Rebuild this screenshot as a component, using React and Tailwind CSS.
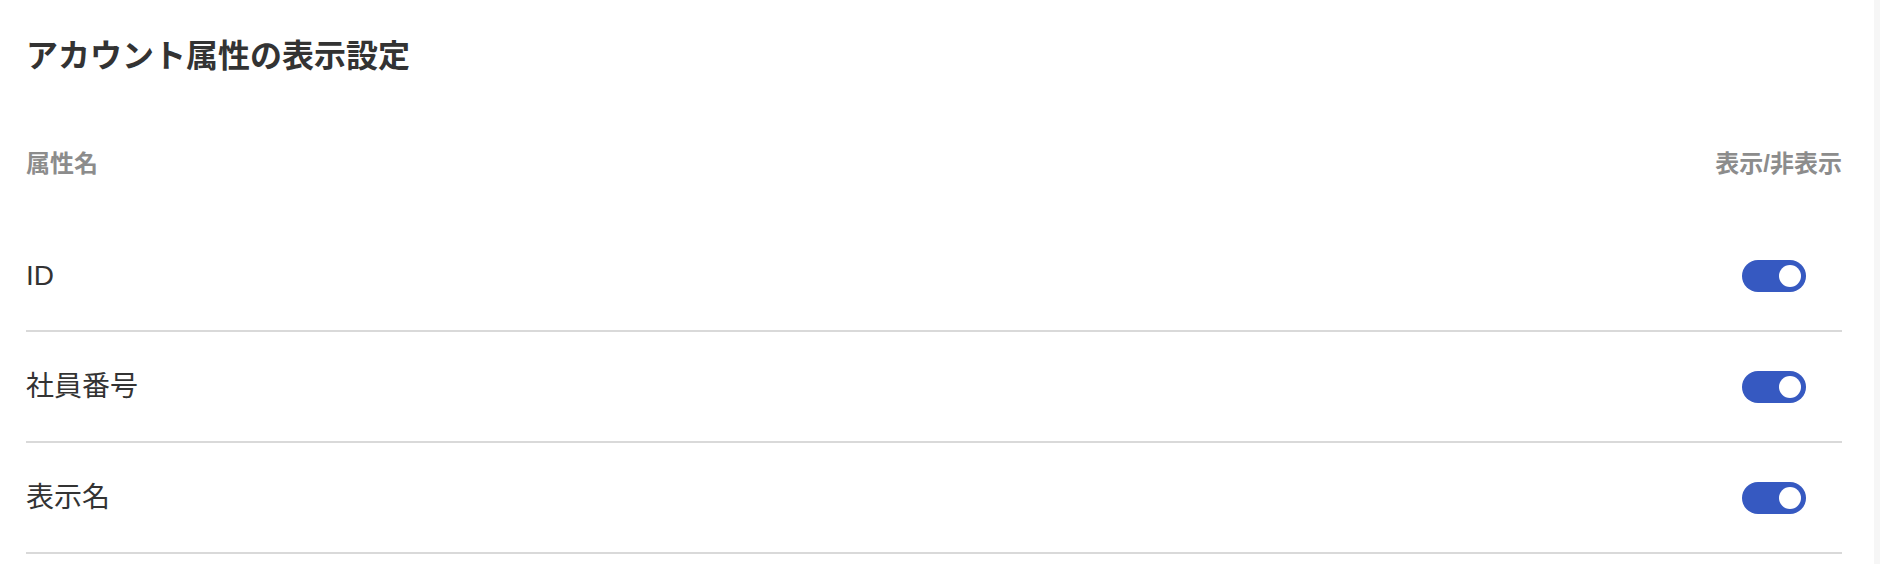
import React, { useState } from "react";

const FONT = { fontFamily: '"Liberation Sans", "Noto Sans CJK JP", sans-serif' };

function Toggle({ on, onChange }) {
  return (
    <button
      type="button"
      onClick={onChange}
      className={`relative flex h-[32px] w-[64px] items-center rounded-full ${on ? "bg-[#3659c1]" : "bg-[#c4c4c4]"}`}
    >
      <span
        className={`absolute top-[5px] h-[22px] w-[22px] rounded-full bg-white ${on ? "right-[5px]" : "left-[5px]"}`}
      />
    </button>
  );
}

export default function App() {
  const [rows, setRows] = useState([
    { name: "ID", on: true },
    { name: "社員番号", on: true },
    { name: "表示名", on: true },
  ]);
  const toggle = (i) =>
    setRows((r) => r.map((x, j) => (j === i ? { ...x, on: !x.on } : x)));

  return (
    <div className="flex h-[564px] w-full bg-white" style={FONT}>
      <div className="flex-1 bg-white pl-[26px] pr-[32px] pt-[32px]">
        <h1 className="h-[48px] text-[32px] font-bold leading-[48px] text-[#333333]">
          アカウント属性の表示設定
        </h1>
        <div className="mt-[68px] flex h-[32px] items-center justify-between text-[24px] font-bold leading-[32px] text-[#8c8c8c]">
          <span>属性名</span>
          <span>表示/非表示</span>
        </div>
        <div className="mt-[41px]">
          {rows.map((r, i) => (
            <div
              key={r.name}
              className="flex h-[111px] items-center justify-between border-b-2 border-[#d9d9d9] text-[28px] text-[#333333]"
            >
              <span className="leading-[36px]">{r.name}</span>
              <div className="mr-[36px]">
                <Toggle on={r.on} onChange={() => toggle(i)} />
              </div>
            </div>
          ))}
        </div>
      </div>
      <div className="w-[6px] bg-[#f6f6f6]" />
    </div>
  );
}
